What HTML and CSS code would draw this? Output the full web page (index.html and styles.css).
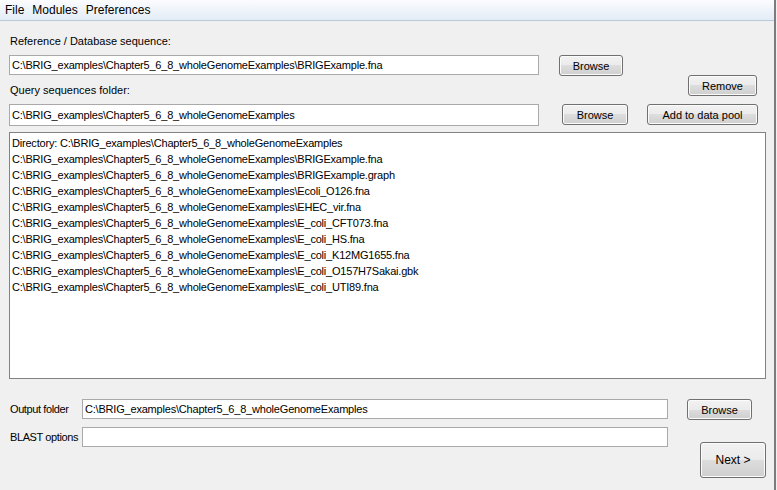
FILE: index.html
```html
<!DOCTYPE html>
<html lang="en">
<head>
    <meta charset="UTF-8">
    <title>BRIG</title>
    <link rel="stylesheet" href="styles.css">
</head>
<body>

<div class="window">
    <div class="menubar">
        <span class="menu-item">File</span>
        <span class="menu-item">Modules</span>
        <span class="menu-item">Preferences</span>
    </div>

    <div class="content">
        <div class="label label-ref">Reference / Database sequence:</div>
        <div class="row row-ref">
            <div class="field field-wide">C:\BRIG_examples\Chapter5_6_8_wholeGenomeExamples\BRIGExample.fna</div>
            <button class="btn btn-browse-ref">Browse</button>
        </div>

        <div class="row row-query-label">
            <div class="label">Query sequences folder:</div>
            <button class="btn btn-remove">Remove</button>
        </div>
        <div class="row row-query">
            <div class="field field-wide field-tall">C:\BRIG_examples\Chapter5_6_8_wholeGenomeExamples</div>
            <button class="btn btn-browse-query">Browse</button>
            <button class="btn btn-add">Add to data pool</button>
        </div>

        <div class="list">
            <div class="list-line">Directory: C:\BRIG_examples\Chapter5_6_8_wholeGenomeExamples</div>
            <div class="list-line">C:\BRIG_examples\Chapter5_6_8_wholeGenomeExamples\BRIGExample.fna</div>
            <div class="list-line">C:\BRIG_examples\Chapter5_6_8_wholeGenomeExamples\BRIGExample.graph</div>
            <div class="list-line">C:\BRIG_examples\Chapter5_6_8_wholeGenomeExamples\Ecoli_O126.fna</div>
            <div class="list-line">C:\BRIG_examples\Chapter5_6_8_wholeGenomeExamples\EHEC_vir.fna</div>
            <div class="list-line">C:\BRIG_examples\Chapter5_6_8_wholeGenomeExamples\E_coli_CFT073.fna</div>
            <div class="list-line">C:\BRIG_examples\Chapter5_6_8_wholeGenomeExamples\E_coli_HS.fna</div>
            <div class="list-line">C:\BRIG_examples\Chapter5_6_8_wholeGenomeExamples\E_coli_K12MG1655.fna</div>
            <div class="list-line">C:\BRIG_examples\Chapter5_6_8_wholeGenomeExamples\E_coli_O157H7Sakai.gbk</div>
            <div class="list-line">C:\BRIG_examples\Chapter5_6_8_wholeGenomeExamples\E_coli_UTI89.fna</div>
        </div>

        <div class="bottom">
            <div class="bottom-fields">
                <div class="row">
                    <div class="label label-side">Output folder</div>
                    <div class="field field-out">C:\BRIG_examples\Chapter5_6_8_wholeGenomeExamples</div>
                </div>
                <div class="row row-blast">
                    <div class="label label-side">BLAST options</div>
                    <div class="field field-out"></div>
                </div>
            </div>
            <div class="bottom-buttons">
                <button class="btn btn-browse-out">Browse</button>
                <button class="btn btn-next">Next &gt;</button>
            </div>
        </div>
    </div>
</div>

</body>
</html>
```

FILE: styles.css
```css
body {
    margin: 0;
    background: #f0f0f0;
    font-family: 'Liberation Sans', Arial, sans-serif;
    font-size: 11px;
    color: #000;
}

.window {
    width: 774px;
    height: 490px;
    border-right: 2px solid #7c7c7c;
    overflow: hidden;
}

.menubar {
    height: 20px;
    border-bottom: 1px solid #b9c9da;
    background: linear-gradient(#fbfcfe, #e3ecf6);
    display: flex;
    align-items: center;
    padding-left: 5px;
    font-size: 12px;
}

.menu-item {
    margin-right: 8px;
}

.content {
    padding-left: 9px;
}

.label {
    height: 13px;
    line-height: 13px;
    padding-left: 1px;
    white-space: nowrap;
}

.label-ref {
    margin-top: 14px;
}

.row {
    display: flex;
    align-items: flex-start;
}

.row-ref {
    margin-top: 7px;
    height: 20px;
}

.field {
    box-sizing: border-box;
    height: 20px;
    line-height: 18px;
    border: 1px solid #a9a9a9;
    background: #fff;
    padding-left: 2px;
    white-space: nowrap;
    overflow: hidden;
    letter-spacing: -0.2px;
}

.field-wide {
    width: 530px;
}

.field-tall {
    height: 22px;
    line-height: 20px;
}

.btn {
    box-sizing: border-box;
    height: 21px;
    padding: 0;
    border: 1px solid #707070;
    border-radius: 3px;
    background: linear-gradient(#f2f2f2, #ebebeb 50%, #dddddd 50%, #cfcfcf);
    box-shadow: inset 0 0 0 1px #fbfbfb;
    font-family: inherit;
    font-size: 11px;
    color: #000;
}

.btn-browse-ref {
    width: 64px;
    margin-left: 20px;
}

.row-query-label {
    height: 21px;
    justify-content: space-between;
    align-items: flex-end;
    width: 748px;
}

.row-query-label .label {
    margin-bottom: -1px;
}

.btn-remove {
    width: 69px;
}

.row-query {
    margin-top: 8px;
    height: 22px;
}

.btn-browse-query {
    width: 66px;
    margin-left: 23px;
}

.btn-add {
    width: 111px;
    margin-left: 19px;
}

.list {
    box-sizing: border-box;
    width: 757px;
    height: 247px;
    margin-top: 6px;
    border: 1px solid #828282;
    background: #fff;
    padding: 2px 0 0 2px;
    letter-spacing: -0.2px;
}

.list-line {
    height: 16px;
    line-height: 16px;
    white-space: nowrap;
}

.bottom {
    display: flex;
    margin-top: 20px;
}

.label-side {
    width: 72px;
    height: 20px;
    line-height: 20px;
    letter-spacing: -0.4px;
}

.field-out {
    width: 586px;
}

.row-blast {
    margin-top: 8px;
}

.bottom-buttons {
    display: flex;
    flex-direction: column;
    align-items: flex-start;
}

.btn-browse-out {
    width: 65px;
    margin-left: 19px;
}

.btn-next {
    width: 66px;
    height: 36px;
    margin-left: 32px;
    margin-top: 22px;
    font-size: 12px;
}
```
